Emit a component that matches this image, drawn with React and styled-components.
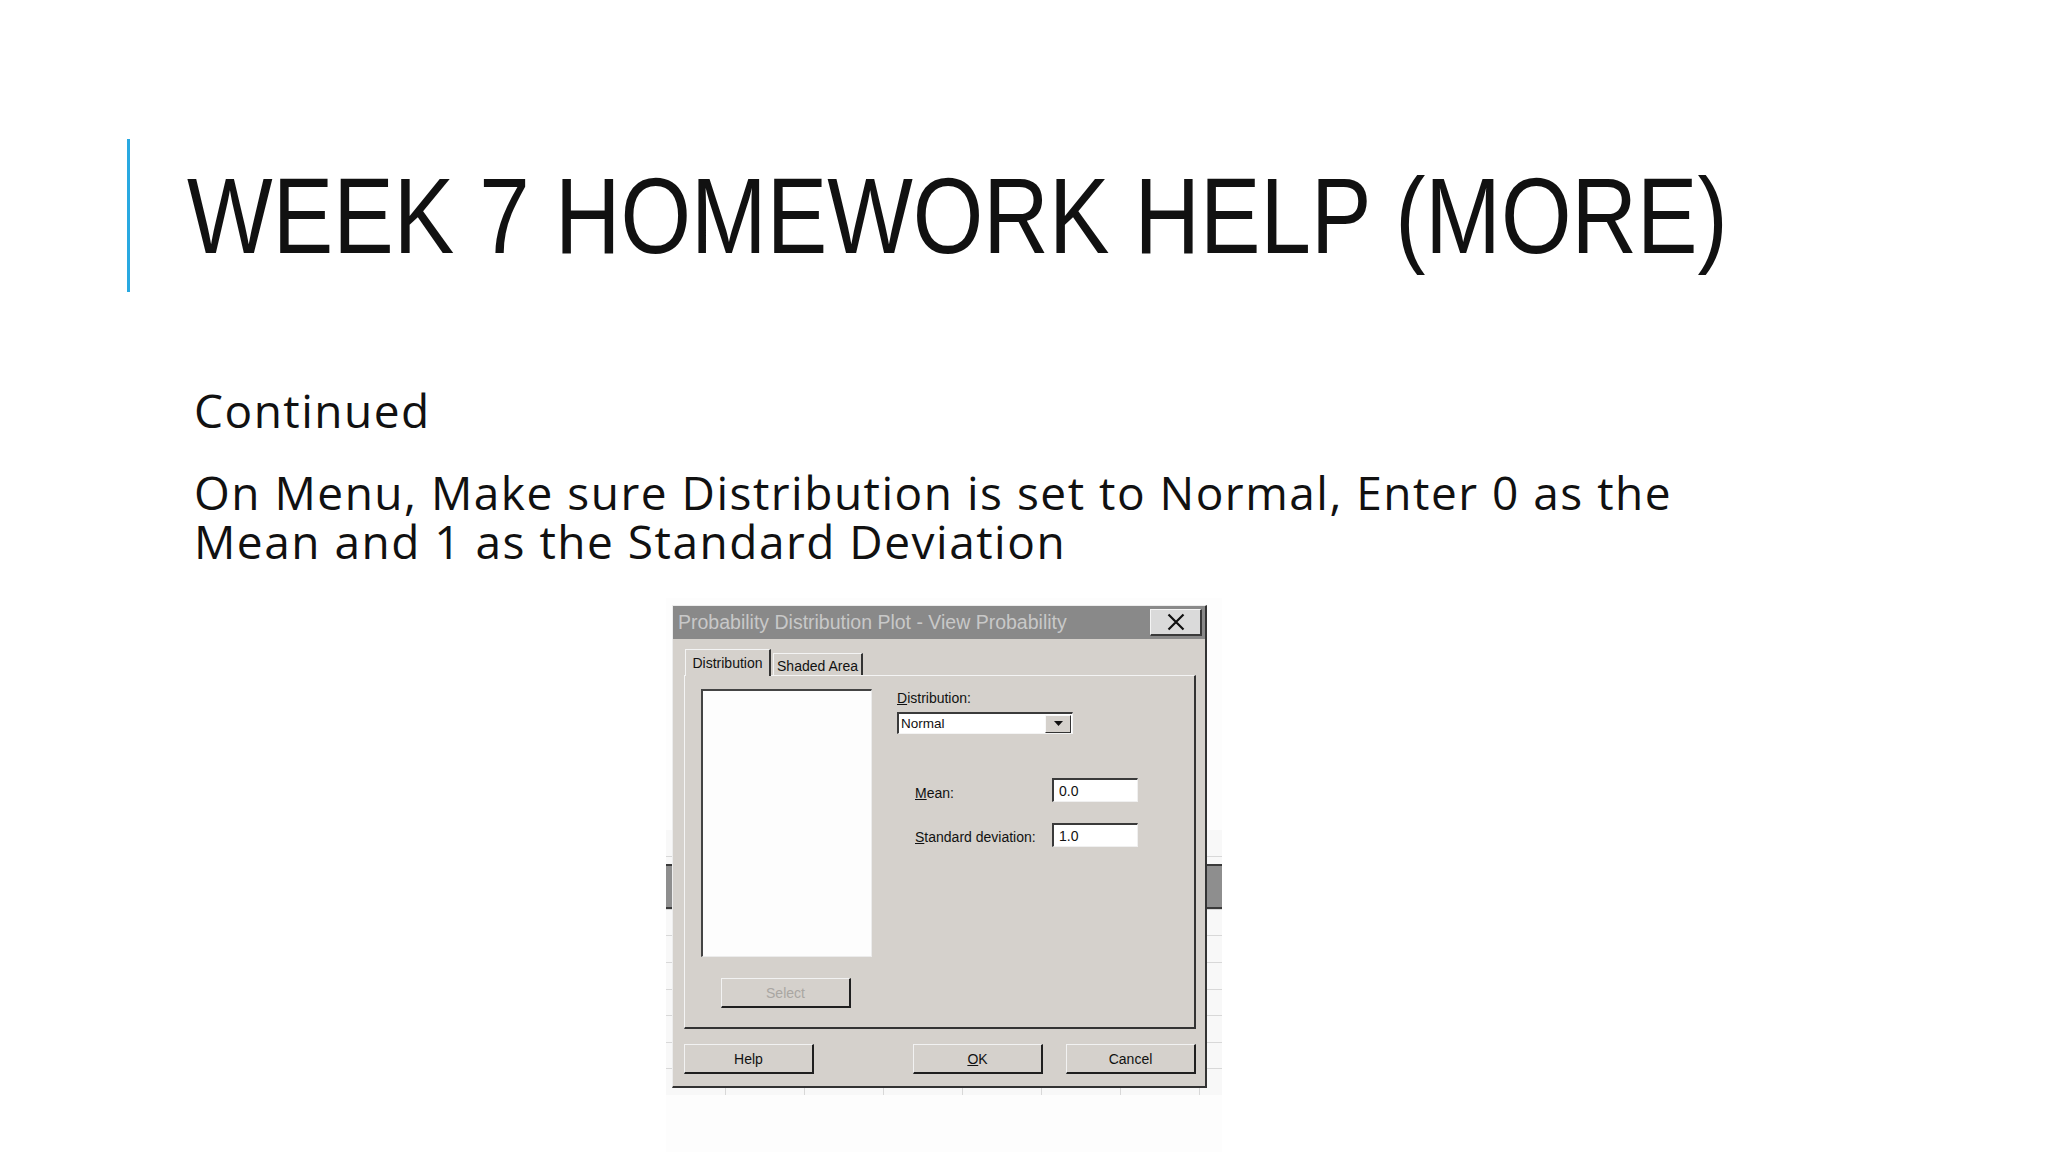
import styled, { createGlobalStyle } from "styled-components";

const GlobalStyle = createGlobalStyle`
  html, body {
    margin: 0;
    padding: 0;
    background: #fff;
  }
  body {
    width: 2048px;
    height: 1152px;
    overflow: hidden;
  }
`;

const Slide = styled.div`
  width: 2048px;
  height: 1152px;
  overflow: hidden;
  background: #fff;
  display: flex;
  flex-direction: column;
`;

const Header = styled.div`
  display: flex;
  align-items: center;
  height: 153px;
  margin-top: 139px;
  padding-left: 127px;
`;

const AccentBar = styled.div`
  width: 3px;
  height: 153px;
  background: #29a9e1;
  flex-shrink: 0;
`;

const Title = styled.h1`
  margin: 0 0 0 57px;
  font-family: "Liberation Sans", Arial, sans-serif;
  font-weight: 400;
  font-size: 108px;
  line-height: 108px;
  color: #111;
  white-space: nowrap;
  transform: scaleX(0.84);
  transform-origin: left center;
`;

const Body = styled.div`
  margin-top: 94px;
  padding-left: 194px;
  font-family: "Open Sans", "Noto Sans", sans-serif;
  font-size: 46px;
  line-height: 49px;
  letter-spacing: 1.5px;
  color: #111;
`;

const Para = styled.p`
  margin: ${(p) => (p.first ? "0" : "33px")} 0 0 0;
  white-space: nowrap;
`;

const Frame = styled.div`
  position: relative;
  margin: 32px 0 0 666px;
  width: 556px;
  height: 560px;
  background: #fdfdfd;
`;

const Sheet = styled.div`
  margin-top: 232px;
  height: 265px;
  background:
    linear-gradient(to bottom, transparent 34px, #3a3a3a 34px, #3a3a3a 36px, #8e8e8e 36px, #8e8e8e 77px, #3a3a3a 77px, #3a3a3a 79px, transparent 79px),
    repeating-linear-gradient(to bottom, transparent 0, transparent 25.6px, #d8d8d8 25.6px, #d8d8d8 26.6px),
    repeating-linear-gradient(to right, transparent 0, transparent 59px, #d8d8d8 59px, #d8d8d8 60px, transparent 60px, transparent 79px),
    #f8f8f8;
`;

const Dialog = styled.div`
  position: absolute;
  top: 7px;
  left: 6px;
  width: 535px;
  height: 483px;
  box-sizing: border-box;
  background: #d5d1cc;
  border-top: 1px solid #ededed;
  border-left: 1px solid #ededed;
  border-right: 2px solid #333;
  border-bottom: 2px solid #333;
  display: flex;
  flex-direction: column;
  font-family: "Liberation Sans", Arial, sans-serif;
  font-size: 14px;
  color: #111;
`;

const TitleBar = styled.div`
  height: 33px;
  flex-shrink: 0;
  background: #898989;
  display: flex;
  align-items: center;
  justify-content: space-between;
  padding: 0 3px 0 5px;
`;

const TitleText = styled.span`
  font-size: 19.5px;
  color: #c8c8c8;
  white-space: nowrap;
`;

const CloseButton = styled.div`
  width: 52px;
  height: 27px;
  box-sizing: border-box;
  background: #dadada;
  border-top: 1px solid #f4f4f4;
  border-left: 1px solid #f4f4f4;
  border-right: 2px solid #3a3a3a;
  border-bottom: 2px solid #3a3a3a;
  display: flex;
  align-items: center;
  justify-content: center;
`;

const Content = styled.div`
  flex: 1;
  display: flex;
  flex-direction: column;
  padding: 10px 9px 0 11px;
`;

const TabRow = styled.div`
  display: flex;
  align-items: flex-end;
  height: 26px;
  padding-left: 1px;
  gap: 2px;
`;

const Tab = styled.div`
  position: relative;
  z-index: 1;
  box-sizing: border-box;
  width: ${(p) => p.w}px;
  height: ${(p) => (p.active ? 27 : 22)}px;
  margin-bottom: ${(p) => (p.active ? -1 : 0)}px;
  padding-top: ${(p) => (p.active ? 0 : 2)}px;
  background: #d5d1cc;
  border-top: 1px solid #f4f4f4;
  border-left: 1px solid #f4f4f4;
  border-right: 2px solid #333;
  display: flex;
  align-items: center;
  justify-content: center;
  line-height: 16px;
`;

const Panel = styled.div`
  height: 354px;
  box-sizing: border-box;
  border-top: 1px solid #f4f4f4;
  border-left: 1px solid #f4f4f4;
  border-right: 2px solid #333;
  border-bottom: 2px solid #333;
  display: flex;
  padding: 13px 0 0 16px;
`;

const LeftCol = styled.div`
  display: flex;
  flex-direction: column;
  align-items: flex-start;
`;

const ListBox = styled.div`
  width: 171px;
  height: 268px;
  box-sizing: border-box;
  background: #fdfdfd;
  border-top: 2px solid #444;
  border-left: 2px solid #444;
  border-right: 1px solid #ececec;
  border-bottom: 1px solid #ececec;
`;

const Button = styled.div`
  width: 130px;
  height: 30px;
  box-sizing: border-box;
  background: #d5d1cc;
  border-top: 1px solid #f2f2f2;
  border-left: 1px solid #f2f2f2;
  border-right: 2px solid #1f1f1f;
  border-bottom: 2px solid #1f1f1f;
  display: flex;
  align-items: center;
  justify-content: center;
  line-height: 16px;
  color: ${(p) => (p.disabled ? "#a9a6a2" : "#111")};
  margin-left: ${(p) => p.ml || "0"};
  margin-top: ${(p) => p.mt || "0"};
`;

const RightCol = styled.div`
  margin-left: 25px;
  padding-top: 1px;
  display: flex;
  flex-direction: column;
`;

const Label = styled.div`
  line-height: 16px;
`;

const Combo = styled.div`
  margin-top: 6px;
  width: 176px;
  height: 22px;
  box-sizing: border-box;
  background: #fff;
  border-top: 2px solid #3a3a3a;
  border-left: 2px solid #3a3a3a;
  border-right: 1px solid #f4f4f4;
  border-bottom: 1px solid #f4f4f4;
  display: flex;
  align-items: center;
  justify-content: space-between;
  padding: 0 1px 0 2px;
  font-size: 13.5px;
`;

const DropButton = styled.div`
  width: 26px;
  height: 18px;
  box-sizing: border-box;
  background: #d5d1cc;
  border-top: 1px solid #f8f8f8;
  border-left: 1px solid #f8f8f8;
  border-right: 1px solid #333;
  border-bottom: 1px solid #333;
  display: flex;
  align-items: center;
  justify-content: center;
`;

const FieldRow = styled.div`
  display: flex;
  margin-left: 18px;
  margin-top: ${(p) => p.mt}px;
`;

const FieldLabel = styled.div`
  width: 137px;
  height: 24px;
  box-sizing: border-box;
  padding-top: ${(p) => p.pt}px;
  line-height: 16px;
  white-space: nowrap;
`;

const FieldInput = styled.div`
  width: 86px;
  height: 24px;
  box-sizing: border-box;
  background: #fff;
  border-top: 2px solid #3a3a3a;
  border-left: 2px solid #3a3a3a;
  border-right: 1px solid #f0f0f0;
  border-bottom: 1px solid #f0f0f0;
  padding-left: 5px;
  display: flex;
  align-items: center;
  line-height: 16px;
`;

const ButtonRow = styled.div`
  display: flex;
  margin-top: 15px;
`;

function CloseIcon() {
  return (
    <svg width="18" height="18" viewBox="0 0 18 18">
      <path d="M1.5 1.5 L16.5 16.5 M16.5 1.5 L1.5 16.5" stroke="#111" strokeWidth="2.2" fill="none" />
    </svg>
  );
}

function DownArrow() {
  return (
    <svg width="9" height="5" viewBox="0 0 9 5">
      <path d="M0 0 H9 L4.5 5 Z" fill="#111" />
    </svg>
  );
}

function ProbabilityDialog() {
  return (
    <Dialog>
      <TitleBar>
        <TitleText>Probability Distribution Plot - View Probability</TitleText>
        <CloseButton>
          <CloseIcon />
        </CloseButton>
      </TitleBar>
      <Content>
        <TabRow>
          <Tab active w={86}>Distribution</Tab>
          <Tab w={90}>Shaded Area</Tab>
        </TabRow>
        <Panel>
          <LeftCol>
            <ListBox />
            <Button disabled ml="20px" mt="21px">Select</Button>
          </LeftCol>
          <RightCol>
            <Label><u>D</u>istribution:</Label>
            <Combo>
              <span>Normal</span>
              <DropButton>
                <DownArrow />
              </DropButton>
            </Combo>
            <FieldRow mt={44}>
              <FieldLabel pt={7}><u>M</u>ean:</FieldLabel>
              <FieldInput>0.0</FieldInput>
            </FieldRow>
            <FieldRow mt={21}>
              <FieldLabel pt={6}><u>S</u>tandard deviation:</FieldLabel>
              <FieldInput>1.0</FieldInput>
            </FieldRow>
          </RightCol>
        </Panel>
        <ButtonRow>
          <Button>Help</Button>
          <Button ml="auto"><u>O</u>K</Button>
          <Button ml="23px">Cancel</Button>
        </ButtonRow>
      </Content>
    </Dialog>
  );
}

export default function App() {
  return (
    <>
      <GlobalStyle />
      <Slide>
        <Header>
          <AccentBar />
          <Title>WEEK 7 HOMEWORK HELP (MORE)</Title>
        </Header>
        <Body>
          <Para first>Continued</Para>
          <Para>
            On Menu, Make sure Distribution is set to Normal, Enter 0 as the
            <br />
            Mean and 1 as the Standard Deviation
          </Para>
        </Body>
        <Frame>
          <Sheet />
          <ProbabilityDialog />
        </Frame>
      </Slide>
    </>
  );
}
